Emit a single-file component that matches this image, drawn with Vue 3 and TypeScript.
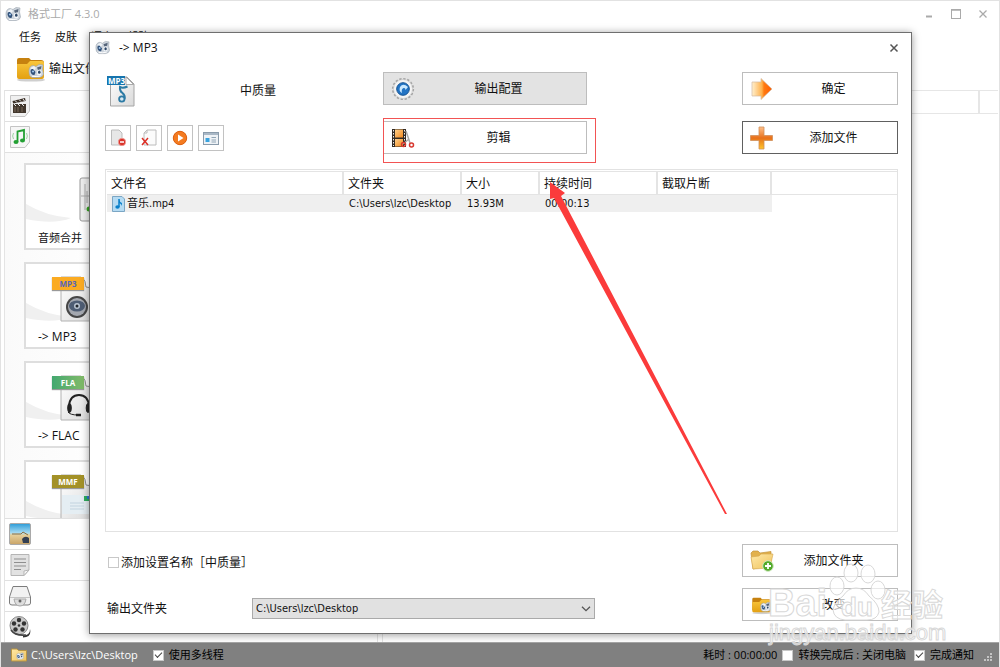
<script setup lang="ts">
import { ref } from 'vue'

interface Preset {
  label: string
  tag: string
  tone: string
  art: 'wave' | 'speaker' | 'headset' | 'page'
}

const menus: string[] = ['任务', '皮肤', '语言', '帮助']
const presets: Preset[] = [
  { label: '音频合并', tag: '', tone: '', art: 'wave' },
  { label: '-> MP3', tag: 'MP3', tone: 'orange', art: 'speaker' },
  { label: '-> FLAC', tag: 'FLA', tone: 'green', art: 'headset' },
  { label: '', tag: 'MMF', tone: 'olive', art: 'page' },
]
const folder = ref<string>('C:\\Users\\lzc\\Desktop')
const appendName = ref<boolean>(false)
const multiThread = ref<boolean>(true)
const shutDown = ref<boolean>(false)
const notify = ref<boolean>(true)
</script>

<template>
  <div class="app">
    <svg class="defs" width="0" height="0" aria-hidden="true">
      <defs>
        <linearGradient id="gOrange" x1="0" y1="0" x2="1" y2="1">
          <stop offset="0" stop-color="#ffd08a" /><stop offset="1" stop-color="#f28a20" />
        </linearGradient>
        <linearGradient id="gArrow" x1="0" y1="0" x2="1" y2="0">
          <stop offset="0" stop-color="#fff0cf" /><stop offset="0.5" stop-color="#ffb04a" /><stop offset="0.6" stop-color="#ff7a10" /><stop offset="1" stop-color="#ff5a00" />
        </linearGradient>
        <linearGradient id="gPlus" x1="0" y1="0" x2="0" y2="1">
          <stop offset="0" stop-color="#ffc08a" /><stop offset="0.5" stop-color="#e8701a" /><stop offset="1" stop-color="#ffc62a" />
        </linearGradient>
        <linearGradient id="gFolder" x1="0" y1="0" x2="0" y2="1">
          <stop offset="0" stop-color="#f9c63c" /><stop offset="1" stop-color="#e3a012" />
        </linearGradient>
        <linearGradient id="gPale" x1="0" y1="0" x2="1" y2="1">
          <stop offset="0" stop-color="#ffe9a8" /><stop offset="1" stop-color="#efc25c" />
        </linearGradient>
        <linearGradient id="gPaper" x1="0" y1="0" x2="1" y2="1">
          <stop offset="0" stop-color="#ffffff" /><stop offset="1" stop-color="#d9d9d9" />
        </linearGradient>
        <linearGradient id="gSky" x1="0" y1="0" x2="0" y2="1">
          <stop offset="0" stop-color="#2b9bd8" /><stop offset="0.45" stop-color="#a8dcf2" /><stop offset="0.55" stop-color="#e6cf9a" /><stop offset="1" stop-color="#c9a468" />
        </linearGradient>
        <symbol id="robot" viewBox="0 0 16 16">
          <path d="M1 8 Q1 3 5 2.500 L8 3.500 L11 1.500 L15 2 L14.500 6 L15.500 11 Q15 14 11 14.500 L4 14.500 Q.5 13 1 8 Z" fill="#cdd4dc" stroke="#98a2ad" stroke-width=".6" />
          <path d="M2.500 5 L6 3 L8 5 L5.500 8 Z" fill="#eff3f7" />
          <path d="M2.500 8 Q2.500 5.500 5 6 L7.500 9 L6.500 12 Q3 12.500 2.500 8 Z" fill="#31517a" /><circle cx="5" cy="8.500" r="1.100" fill="#9fc4ea" />
          <path d="M9 4.500 L13.500 3 L13 6 L10 7 Z" fill="#56657a" />
          <path d="M9 8 Q12 5.500 13.500 8.500 L13 12 H9.500 Z" fill="#f4f7fa" /><ellipse cx="11.300" cy="9.200" rx="1.300" ry="1.600" fill="#2d4767" />
          <path d="M4 13.300 Q8 14 12.500 13" stroke="#fff" fill="none" />
        </symbol>
        <symbol id="folderRobot" viewBox="0 0 30 26">
          <ellipse cx="15" cy="24" rx="14" ry="1.600" fill="#cfcfcf" />
          <path d="M1 4 Q1 2 3 2 H13 L15 4 H25 Q28 4 28 7 V20 H1 Z" fill="#c6810f" />
          <path d="M1 8 H11 L14 5 H26 Q28 5 28 7 V21 Q28 23 26 23 H3 Q1 23 1 21 Z" fill="url(#gFolder)" />
          <use href="#robot" x="12" y="7" width="16" height="16" />
        </symbol>
      </defs>
    </svg>

    <header class="titlebar">
      <svg class="logo" viewBox="0 0 16 16"><use href="#robot" /></svg>
      <span class="app-title">格式工厂 4.3.0</span>
      <div class="win-buttons">
        <button type="button" aria-label="Minimize"><svg viewBox="0 0 10 10"><path d="M2 7.500 H8" stroke="#aaa" stroke-width="2" /></svg></button>
        <button type="button" aria-label="Maximize"><svg viewBox="0 0 10 10"><rect x=".5" y=".5" width="9" height="9" fill="none" stroke="#aaa" /><path d="M0 1 H10" stroke="#aaa" stroke-width="1.500" /></svg></button>
        <button type="button" aria-label="Close"><svg viewBox="0 0 10 10"><path d="M1.500 1.500 L8.500 8.500 M8.500 1.500 L1.500 8.500" stroke="#aaa" stroke-width="1.300" /></svg></button>
      </div>
    </header>

    <nav class="menu">
      <button v-for="m in menus" :key="m" type="button">{{ m }}</button>
    </nav>

    <div class="toolbar">
      <button type="button"><svg class="tool-icon" viewBox="0 0 30 26"><use href="#folderRobot" /></svg>输出文件夹</button>
    </div>

    <div class="workspace">
      <aside class="side">
        <button class="category" type="button" aria-label="Video">
          <svg viewBox="0 0 20 22">
            <path d="M.5 .5 H19.500 V16 L15 21.500 H.5 Z" fill="#f0f0f0" stroke="#c4c4c4" />
            <path d="M3 9 H16 V18 H3 Z" fill="#42372d" /><path d="M2.500 6 L15 3 L15.700 6 L3.200 8.500 Z" fill="#3c3128" />
            <path d="M5 5.500 L7 7.500 M9 4.500 L11 6.500 M13 4 L14.500 6 M4 9 L6 11 M8 9 L10 11 M12 9 L14 11" stroke="#eee" />
            <path d="M5 12 V17 M8 12 V17 M12 12 V17" stroke="#796b5b" />
          </svg>
        </button>
        <button class="category" type="button" aria-label="Audio">
          <svg viewBox="0 0 20 22">
            <path d="M.5 .5 H19.500 V16 L15 21.500 H.5 Z" fill="#f6f6f6" stroke="#c4c4c4" />
            <path d="M7.500 16 V5.500 L14 4 V14" fill="none" stroke="#23a033" stroke-width="1.800" />
            <ellipse cx="6" cy="16" rx="2.500" ry="2" fill="#23a033" /><ellipse cx="12.500" cy="14.500" rx="2.500" ry="2" fill="#23a033" />
            <path d="M3.500 7 Q1.800 10 3.500 13 M16.500 7 Q18.200 10 16.500 13" fill="none" stroke="#9ed5a4" />
          </svg>
        </button>
        <div class="presets">
          <button v-for="p in presets" :key="p.art" class="preset" type="button">
            <svg class="preset-art" viewBox="0 0 110 84">
              <path d="M0 39 Q20 51 45 53 Q28 60 0 54 Z" fill="#f0f0f0" />
              <template v-if="p.art === 'wave'">
                <rect x="54" y="13" width="50" height="43" rx="2" fill="#eee" stroke="#999" />
                <path d="M55 31 H66 M59 19 V45 M61 26 V38" stroke="#aaa" /><circle cx="63" cy="44" r="2.500" fill="#37a521" />
              </template>
              <template v-else>
                <path d="M35 13 H55 L67 25 V57 H35 Z" fill="url(#gPaper)" stroke="#b2b2b2" />
                <path d="M56 13 Q60 17 60 23 L67 24" fill="#fff" stroke="#8c8c8c" />
                <g v-if="p.art === 'speaker'">
                  <circle cx="51" cy="43" r="11" fill="#464646" /><circle cx="51" cy="43" r="9" fill="#a4a8b0" />
                  <ellipse cx="51" cy="42" rx="8" ry="5.500" fill="#4e5d74" /><circle cx="51" cy="42" r="3" fill="#b9c4d2" /><circle cx="51" cy="42" r="1.500" fill="#20262e" />
                </g>
                <g v-else-if="p.art === 'headset'" fill="none" stroke="#222">
                  <path d="M43 43 Q44 32 53 32 Q62 32 63 43" stroke-width="2" />
                  <ellipse cx="43.500" cy="45" rx="1.800" ry="4.500" fill="#222" /><ellipse cx="62" cy="45" rx="1.800" ry="4.500" fill="#222" />
                  <path d="M42 49 Q44 52 52 52" /><path d="M50 52 H55" stroke-width="2.500" />
                </g>
                <g v-else>
                  <path d="M36 33 H67 V52 H36 Z" fill="#e5eef3" /><path d="M44 41 H58 M44 44 H58 M44 47 H58" stroke="#c2d3df" />
                  <rect x="58" y="34" width="7" height="5" fill="#2fae5f" /><rect x="61" y="34" width="4" height="3" fill="#2c78d4" />
                </g>
              </template>
            </svg>
            <span v-if="p.tag" class="tag" :class="p.tone">{{ p.tag }}</span>
            <span v-if="p.label" class="preset-label" :class="{ latin: p.tag }">{{ p.label }}</span>
          </button>
        </div>
        <button class="category" type="button" aria-label="Picture">
          <svg viewBox="0 0 22 22"><rect x=".5" y=".5" width="21" height="21" rx="1.500" fill="url(#gSky)" stroke="#a9a9a9" /><path d="M3 11 H12 L14 9 L19 12" stroke="#8c6f42" fill="none" /><path d="M13 16 Q16 12 20 15 V20 H14 Z" fill="#344052" /></svg>
        </button>
        <button class="category" type="button" aria-label="Document">
          <svg viewBox="0 0 22 22"><path d="M2 .5 H20 V16 L15 21.500 H2 Z" fill="#e2e2e2" stroke="#b5b5b5" /><path d="M5 5 H17 M5 8.500 H17 M5 12 H17 M5 15.500 H12" stroke="#8f8f8f" /><path d="M20 16 L15 21.500 V17 Z" fill="#fafafa" stroke="#b5b5b5" /></svg>
        </button>
        <button class="category" type="button" aria-label="Disc">
          <svg viewBox="0 0 22 22"><path d="M4 1.500 H18 L21.500 12 V18 Q21.500 20 19 20 H3 Q.5 20 .5 18 V12 Z" fill="#f2f2f2" stroke="#7c7c7c" /><path d="M1 12.500 H21" stroke="#c5c5c5" /><path d="M5 14 H17 Q16 21 11 21 Q6 21 5 14" fill="#ddd" stroke="#aaa" /><circle cx="11" cy="16" r="1.500" fill="#666" /></svg>
        </button>
        <button class="category" type="button" aria-label="Tools">
          <svg viewBox="0 0 22 22"><path d="M14 19 Q21 20 21 13 Q23 21 14 21.500 Z" fill="#333" /><circle cx="10" cy="9.500" r="9" fill="#c9c9c9" stroke="#888" /><g fill="#333"><circle cx="10" cy="4" r="2.200" /><circle cx="15" cy="7.500" r="2.200" /><circle cx="13.500" cy="13.500" r="2.200" /><circle cx="6.500" cy="13.500" r="2.200" /><circle cx="5" cy="7.500" r="2.200" /><circle cx="10" cy="9.500" r="1.300" /></g><path d="M2 14 Q6 20 17 19" fill="none" stroke="#444" stroke-width="1.600" /></svg>
        </button>
      </aside>
      <section class="queue"><div class="queue-head"><i></i></div></section>
    </div>

    <footer class="status">
      <svg class="status-icon" viewBox="0 0 16 14"><path d="M.5 1 H6 L7.500 2.500 H15.500 V13 H.5 Z" fill="url(#gPale)" stroke="#b99543" /><use href="#robot" x="5" y="4" width="8" height="8" /></svg>
      <span class="status-path">{{ folder }}</span>
      <label class="check"><input v-model="multiThread" type="checkbox" />使用多线程</label>
      <span class="elapsed">耗时 : 00:00:00</span>
      <label class="check"><input v-model="shutDown" type="checkbox" />转换完成后 : 关闭电脑</label>
      <label class="check"><input v-model="notify" type="checkbox" />完成通知</label>
      <svg class="grip" viewBox="0 0 9 9" fill="#c4c4c4"><path d="M6 0h2v2h-2z M3 3h2v2h-2z M6 3h2v2h-2z M0 6h2v2h-2z M3 6h2v2h-2z M6 6h2v2h-2z" /></svg>
    </footer>

    <section class="dialog" role="dialog" aria-labelledby="dialog-title">
      <header class="dialog-head">
        <svg class="logo" viewBox="0 0 16 16"><use href="#robot" /></svg>
        <h1 id="dialog-title">-&gt; MP3</h1>
        <button class="close" type="button" aria-label="Close dialog"><svg viewBox="0 0 10 10"><path d="M1.500 1.500 L8.500 8.500 M8.500 1.500 L1.500 8.500" stroke="#555" stroke-width="1.500" /></svg></button>
      </header>

      <div class="dialog-body">
        <div class="options">
          <div class="format">
            <svg class="mp3-icon" viewBox="0 0 28 32">
              <path d="M3.500 2 H20 L27 9 V31 H3.500 Z" fill="url(#gPaper)" stroke="#a6a6a6" />
              <path d="M19 2 V9.500 H26.500 Z" fill="#fff" stroke="#999" stroke-width=".8" />
              <path d="M20.500 11.500 Q16 13.500 13 12 Q12.500 16 15.500 18 Q18.500 20.500 17.500 24" fill="none" stroke="#2d7ba5" stroke-width="2" />
              <circle cx="14.800" cy="24" r="2.700" fill="#d9eaf3" stroke="#2d7ba5" stroke-width="1.800" />
              <rect x="0" y="1" width="18" height="9" fill="#1674ad" /><text x="1" y="8.500" class="mp3-text">MP3</text>
            </svg>
            <span class="quality">中质量</span>
          </div>
          <button class="wide pressed" type="button">
            <svg class="btn-icon" viewBox="0 0 24 24"><circle cx="12" cy="12" r="10.200" fill="none" stroke="#a5a5a5" stroke-width="1.800" stroke-dasharray="2.300 1.700" /><circle cx="12" cy="12" r="9.500" fill="#f4f4f4" stroke="#c4c4c4" stroke-width=".6" /><circle cx="12" cy="12" r="6.300" fill="#2374c4" stroke="#155494" /><path d="M17 10 Q12 5.500 9 10 Q7.500 14.500 11 16 Q10 12 12.500 11 Q14.500 10.500 14.500 13 Z" fill="#cae9ff" /></svg>
            <span>输出配置</span>
          </button>
          <button class="wide action" type="button">
            <svg class="btn-icon" viewBox="0 0 24 24"><path d="M2 5 H11 V1.500 L22 12 L11 22.500 V19 H2 Z" fill="url(#gArrow)" stroke="#d3b9a0" stroke-width=".7" /></svg>
            <span>确定</span>
          </button>

          <div class="tools">
            <button type="button" aria-label="Remove"><svg viewBox="0 0 16 18"><path d="M1.500 1 H9 L12 4 V16 H1.500 Z" fill="#e7e7e7" stroke="#bcbcbc" /><circle cx="12" cy="13" r="3.700" fill="#d9342b" stroke="#f3a39e" stroke-width=".7" /><path d="M10 13 H14" stroke="#fff" stroke-width="1.500" /></svg></button>
            <button type="button" aria-label="Clear"><svg viewBox="0 0 16 18"><path d="M6 1 H15 V16 H3 V4 Z" fill="#fbfbfb" stroke="#bcbcbc" /><path d="M6 1 V4 H3" fill="none" stroke="#bcbcbc" /><path d="M1 9 L7 16 M7 9 L1 16" stroke="#dd2f26" stroke-width="1.500" /></svg></button>
            <button type="button" aria-label="Play"><svg viewBox="0 0 16 18"><circle cx="8" cy="9" r="6.700" fill="#f47b20" stroke="#dc5e0c" /><path d="M6 5.500 L11.500 9 L6 12.500 Z" fill="#fff" /></svg></button>
            <button type="button" aria-label="Properties"><svg viewBox="0 0 16 18"><rect x=".5" y="3.500" width="15" height="12" fill="#eef2f6" stroke="#8a9bab" /><path d="M1 5 H15" stroke="#a9b8c6" stroke-width="2" /><rect x="2.500" y="9" width="4" height="4" fill="#38a3df" /><path d="M8.500 8.500 H13 M8.500 11 H13 M8.500 13 H13" stroke="#92a6b6" /></svg></button>
          </div>
          <div class="clip-cell">
            <button class="wide" type="button">
              <svg class="btn-icon" viewBox="0 0 24 24"><rect x="1" y="3" width="14" height="18" fill="#342b23" /><rect x="4" y="3.500" width="8" height="8" fill="url(#gOrange)" /><rect x="4" y="13" width="8" height="7.500" fill="url(#gOrange)" /><path d="M2.500 4 V20 M13.500 4 V20" stroke="#eee" stroke-dasharray="1.500 1.500" /><path d="M15 5 L19 17 M12 18 L18 13" stroke="#aaa" stroke-width="1.500" /><circle cx="12.500" cy="18.500" r="2" fill="none" stroke="#d8382f" stroke-width="1.500" /><circle cx="20.500" cy="19" r="2" fill="none" stroke="#d8382f" stroke-width="1.500" /></svg>
              <span>剪辑</span>
            </button>
            <div class="highlight"></div>
          </div>
          <button class="wide action focus" type="button">
            <svg class="btn-icon" viewBox="0 0 24 24"><path d="M9 1 H14 V9.500 H22.500 V14.500 H14 V23 H9 V14.500 H.5 V9.500 H9 Z" fill="url(#gPlus)" stroke="#cf8f5c" stroke-width=".8" /></svg>
            <span>添加文件</span>
          </button>
        </div>

        <div class="list">
          <table>
            <colgroup><col class="c-name" /><col class="c-folder" /><col class="c-size" /><col class="c-time" /><col class="c-clip" /><col /></colgroup>
            <thead><tr><th>文件名</th><th>文件夹</th><th>大小</th><th>持续时间</th><th>截取片断</th><th></th></tr></thead>
            <tbody>
              <tr>
                <td><div class="file"><svg viewBox="0 0 13 16"><path d="M.5 .5 H10 L12.500 3 V15.500 H.5 Z" fill="#b5dbf3" stroke="#7ba6c4" /><path d="M7 3 V11" stroke="#087fca" stroke-width="1.500" /><ellipse cx="5.500" cy="11" rx="2.200" ry="1.800" fill="#087fca" /><path d="M7 3 Q7.500 6 10 7 Q10 9 9 10 Q9.500 7.500 7 7 Z" fill="#087fca" /></svg>音乐.mp4</div></td>
                <td>{{ folder }}</td><td>13.93M</td><td>00:00:13</td><td></td><td></td>
              </tr>
            </tbody>
          </table>
        </div>

        <div class="bottom">
          <label class="append"><input v-model="appendName" type="checkbox" />添加设置名称［中质量］</label>
          <button class="wide action" type="button">
            <svg class="btn-icon" viewBox="0 0 24 24"><path d="M1 4 L3 2 H8 L10 4 L21 2.500 V16 L3 20 Z" fill="#e2b14c" stroke="#c2923a" stroke-width=".7" /><path d="M1 8 L9 7 L11 5 L23 5 L20 19 L3 20 Z" fill="url(#gPale)" stroke="#d5a64b" stroke-width=".6" /><circle cx="18" cy="17" r="5.300" fill="#52a92b" stroke="#cfe9be" /><path d="M15 17 H21 M18 14 V20" stroke="#fff" stroke-width="1.800" /></svg>
            <span>添加文件夹</span>
          </button>
          <div class="output">
            <label for="output-folder">输出文件夹</label>
            <div class="select">
              <select id="output-folder" v-model="folder"><option>C:\Users\lzc\Desktop</option></select>
              <svg viewBox="0 0 10 6"><path d="M1 .7 L5 4.700 L9 .7" fill="none" stroke="#555" stroke-width="1.300" /></svg>
            </div>
          </div>
          <button class="wide action" type="button">
            <svg class="btn-icon" viewBox="0 0 30 30"><use href="#folderRobot" x="2" y="4" width="26" height="23" /></svg>
            <span>改变</span>
          </button>
        </div>
      </div>
    </section>

    <svg class="pointer" aria-hidden="true"><path d="M550 182 L565 193 L561 196 L727 514 L725 514 L554 198 L550 199 Z" /></svg>

    <svg class="watermark" viewBox="0 0 184 90" aria-hidden="true">
      <text x="1" y="54" class="wm-bai">Bai</text>
      <g class="wm-paw">
        <ellipse cx="70" cy="24" rx="7" ry="9" /><ellipse cx="84" cy="11" rx="7" ry="9" /><ellipse cx="101" cy="12" rx="7" ry="9" /><ellipse cx="111" cy="28" rx="7" ry="9" />
        <path d="M89 26 Q97 26 102 34 Q112 42 112 50 Q110 58 100 58 H78 Q67 57 66 48 Q67 41 76 34 Q81 26 89 26 Z" />
      </g>
      <text x="74" y="54" class="wm-du">du</text>
      <text x="114" y="54" class="wm-cn">经验</text>
      <text x="2" y="78" class="wm-url">jingyan.baidu.com</text>
    </svg>
  </div>
</template>

<style>
body {
  margin: 0;
}
</style>

<style scoped>
.app {
  position: relative;
  box-sizing: border-box;
  min-height: 100vh;
  display: flex;
  flex-direction: column;
  background: #fff;
  border: 1px solid #e2e2e2;
  border-bottom: 0;
  color: #111;
  font: 12px/16px "Open Sans", "Noto Sans CJK SC", sans-serif;
  overflow: hidden;
}
.app *,
.app *::before {
  box-sizing: border-box;
}
.defs {
  position: absolute;
}
svg {
  display: block;
  flex: none;
}
button {
  padding: 0;
  border: 0;
  background: none;
  color: inherit;
  font: inherit;
}
.titlebar {
  display: flex;
  align-items: center;
  height: 26px;
  padding: 0 11px 0 4px;
}
.logo {
  width: 16px;
  height: 16px;
}
.app-title {
  margin-left: 7px;
  color: #aaa;
  font-size: 11px;
}
.win-buttons {
  display: flex;
  gap: 17px;
  margin-left: auto;
}
.win-buttons svg,
.close svg {
  width: 10px;
  height: 10px;
}
.menu {
  display: flex;
  gap: 14px;
  padding: 2px 18px;
  font-size: 11px;
}
.toolbar {
  height: 43px;
  padding: 9px 15px;
}
.toolbar button {
  display: flex;
  align-items: center;
  gap: 3px;
}
.toolbar button,
.menu button {
  line-height: 16px;
}
.tool-icon {
  width: 30px;
  height: 26px;
}
.workspace {
  flex: 1;
  min-height: 0;
  display: flex;
  padding-left: 3px;
}
.side {
  display: flex;
  flex-direction: column;
  width: 374px;
  border: solid #e4e4e4;
  border-width: 0 1px 0 1px;
  background: linear-gradient(90deg, #fafafa, #fff 30%);
}
.category {
  flex: none;
  display: flex;
  align-items: center;
  width: 100%;
  height: 31px;
  padding-left: 4px;
  border-top: 1px solid #e0e0e0;
  background: #fff;
}
.category svg {
  width: 22px;
  height: 22px;
}
.presets {
  flex: 1 1 0;
  min-height: 0;
  overflow: hidden;
  display: flex;
  flex-direction: column;
  gap: 12px;
  padding: 10px 0 0 19px;
  border-top: 1px solid #e0e0e0;
}
.preset {
  position: relative;
  flex: none;
  width: 112px;
  height: 87px;
  border: 2px solid #dedede;
  background: #fff;
  display: flex;
  align-items: flex-end;
  overflow: hidden;
}
.preset-art {
  position: absolute;
  top: 0;
  left: 0;
  width: 110px;
  height: 84px;
}
.preset-label {
  position: relative;
  padding: 0 0 2px 12px;
  font-size: 11px;
}
.latin {
  font-size: 12px;
}
.tag {
  position: absolute;
  top: 13px;
  left: 26px;
  width: 32px;
  color: #fff;
  font-weight: 700;
  font-size: 8px;
  line-height: 13px;
  text-align: center;
  box-shadow: 0 1px 1px #999;
}
.orange {
  background: #fbab22;
  color: #5566b8;
}
.green {
  background: linear-gradient(90deg, #43a870, #82bb69);
}
.olive {
  background: #a39127;
}
.queue {
  flex: 1;
  margin-left: 4px;
  border-left: 1px solid #e4e4e4;
}
.queue-head {
  display: flex;
  justify-content: flex-end;
  height: 24px;
  margin-right: 1px;
  border: solid #e6e6e6;
  border-width: 1px 0;
}
.queue-head i {
  width: 20px;
  border-left: 2px solid #e6e6e6;
}
.status {
  display: flex;
  align-items: center;
  height: 25px;
  padding: 0 6px 0 10px;
  border-top: 1px solid #a5a5a5;
  background: #808080;
  color: #000;
  font-size: 11px;
}
.status-icon {
  width: 16px;
  height: 14px;
}
.status-path {
  margin: 0 15px 0 4px;
  color: #fff;
}
.elapsed {
  margin-left: auto;
}
.check,
.append {
  display: flex;
  align-items: center;
  gap: 5px;
}
.elapsed + .check {
  margin: 0 8px 0 5px;
}
input[type='checkbox'] {
  appearance: none;
  width: 11px;
  height: 11px;
  margin: 0;
  border: 1px solid #c8c8c8;
  background: #fff;
  display: grid;
  place-items: center;
}
input[type='checkbox']:checked::before {
  content: '';
  width: 7px;
  height: 4px;
  border: solid #444;
  border-width: 0 0 1px 1px;
  transform: rotate(-45deg);
  margin-bottom: 2px;
}
.grip {
  width: 9px;
  height: 9px;
  margin-left: 10px;
  align-self: flex-end;
  margin-bottom: 5px;
}
.dialog {
  position: absolute;
  inset: 31px 87px 33px 88px;
  display: flex;
  flex-direction: column;
  border: 1px solid #6f6f6f;
  background: #fff;
  box-shadow: 0 1px 8px rgba(0, 0, 0, 0.4);
}
.dialog-head {
  display: flex;
  align-items: center;
  height: 29px;
  padding: 0 12px 0 5px;
}
.dialog-head .logo {
  width: 15px;
  height: 15px;
}
h1 {
  margin: 0 0 0 9px;
  font-size: 12px;
  font-weight: 400;
}
.close {
  margin-left: auto;
}
.dialog-body {
  flex: 1;
  display: flex;
  flex-direction: column;
  padding: 10px 13px 12px 15px;
}
.options {
  display: grid;
  grid-template-columns: 278px 204px 1fr;
  grid-template-rows: 33px 33px;
  row-gap: 16px;
}
.wide {
  display: flex;
  align-items: center;
  width: 100%;
  height: 33px;
  padding: 0 4px 0 7px;
  border: 1px solid #bdbdbd;
  background: #fff;
}
.wide span {
  flex: 1;
  text-align: center;
}
.pressed {
  background: #e3e3e3;
}
.action {
  width: 156px;
  margin-left: auto;
}
.focus {
  border-color: #606060;
}
.btn-icon {
  width: 24px;
  height: 24px;
}
.format {
  display: flex;
  align-items: center;
  padding: 4px 0 0 2px;
}
.mp3-icon {
  width: 28px;
  height: 32px;
}
.mp3-text {
  fill: #fff;
  font: 700 8px "Open Sans", sans-serif;
}
.quality {
  margin-left: 105px;
}
.tools {
  display: flex;
  align-items: center;
  gap: 5px;
}
.tools button {
  display: grid;
  place-items: center;
  width: 26px;
  height: 26px;
  border: 1px solid #c2c2c2;
}
.tools svg {
  width: 16px;
  height: 18px;
}
.clip-cell {
  position: relative;
}
.highlight {
  position: absolute;
  inset: -3px -9px -9px 0;
  border: 1px solid #f25353;
  pointer-events: none;
}
.list {
  flex: 1;
  margin-top: 15px;
  padding: 1px 0 0 1px;
  border: 1px solid #e2e2e2;
}
table {
  width: 100%;
  table-layout: fixed;
  border-collapse: separate;
  border-spacing: 0;
}
.c-name {
  width: 237px;
}
.c-folder,
.c-time {
  width: 118px;
}
.c-size {
  width: 78px;
}
.c-clip {
  width: 114px;
}
th {
  height: 24px;
  padding: 2px 4px 0;
  border: solid #e4e4e4;
  border-width: 1px 2px 1px 0;
  text-align: left;
  font-weight: 400;
}
th:last-child {
  border-right: 0;
}
td {
  height: 17px;
  padding: 0 5px;
  background: #efefef;
  font: 11px/16px "DejaVu Sans Condensed", "Noto Sans CJK SC", sans-serif;
  white-space: nowrap;
}
td:last-child {
  background: #fff;
}
.file {
  display: flex;
  align-items: center;
  gap: 2px;
}
.file svg {
  width: 13px;
  height: 16px;
}
.bottom {
  display: grid;
  grid-template-columns: 1fr 156px;
  row-gap: 11px;
  align-items: center;
  margin-top: 12px;
}
.append {
  gap: 2px;
  padding: 4px 0 0 3px;
}
.output {
  display: flex;
  align-items: center;
  padding: 8px 0 0 2px;
}
.output label {
  width: 145px;
}
.select {
  position: relative;
  width: 343px;
}
.select select {
  display: block;
  appearance: none;
  width: 100%;
  height: 21px;
  padding: 0 3px;
  border: 1px solid #aaa;
  border-radius: 0;
  background: #e1e1e1;
  color: #111;
  font: 11px/19px "DejaVu Sans Condensed", sans-serif;
}
.select svg {
  position: absolute;
  top: 8px;
  right: 4px;
  width: 10px;
  height: 6px;
  pointer-events: none;
}
.pointer {
  position: absolute;
  inset: -1px;
  width: 100%;
  height: 100%;
  pointer-events: none;
  fill: #fb3b3b;
}
.watermark {
  position: absolute;
  right: 48px;
  bottom: 15px;
  width: 184px;
  height: 90px;
  pointer-events: none;
  fill: rgba(255, 255, 255, 0.65);
  stroke: #d8d8d8;
  stroke-width: 1;
  font-family: "Liberation Sans", "Noto Sans CJK SC", sans-serif;
}
.wm-bai {
  font-size: 38px;
  font-weight: 700;
}
.wm-du {
  font-size: 26px;
  font-weight: 700;
}
.wm-cn {
  font-size: 31px;
  font-weight: 700;
}
.wm-url {
  font-size: 22px;
}
</style>
